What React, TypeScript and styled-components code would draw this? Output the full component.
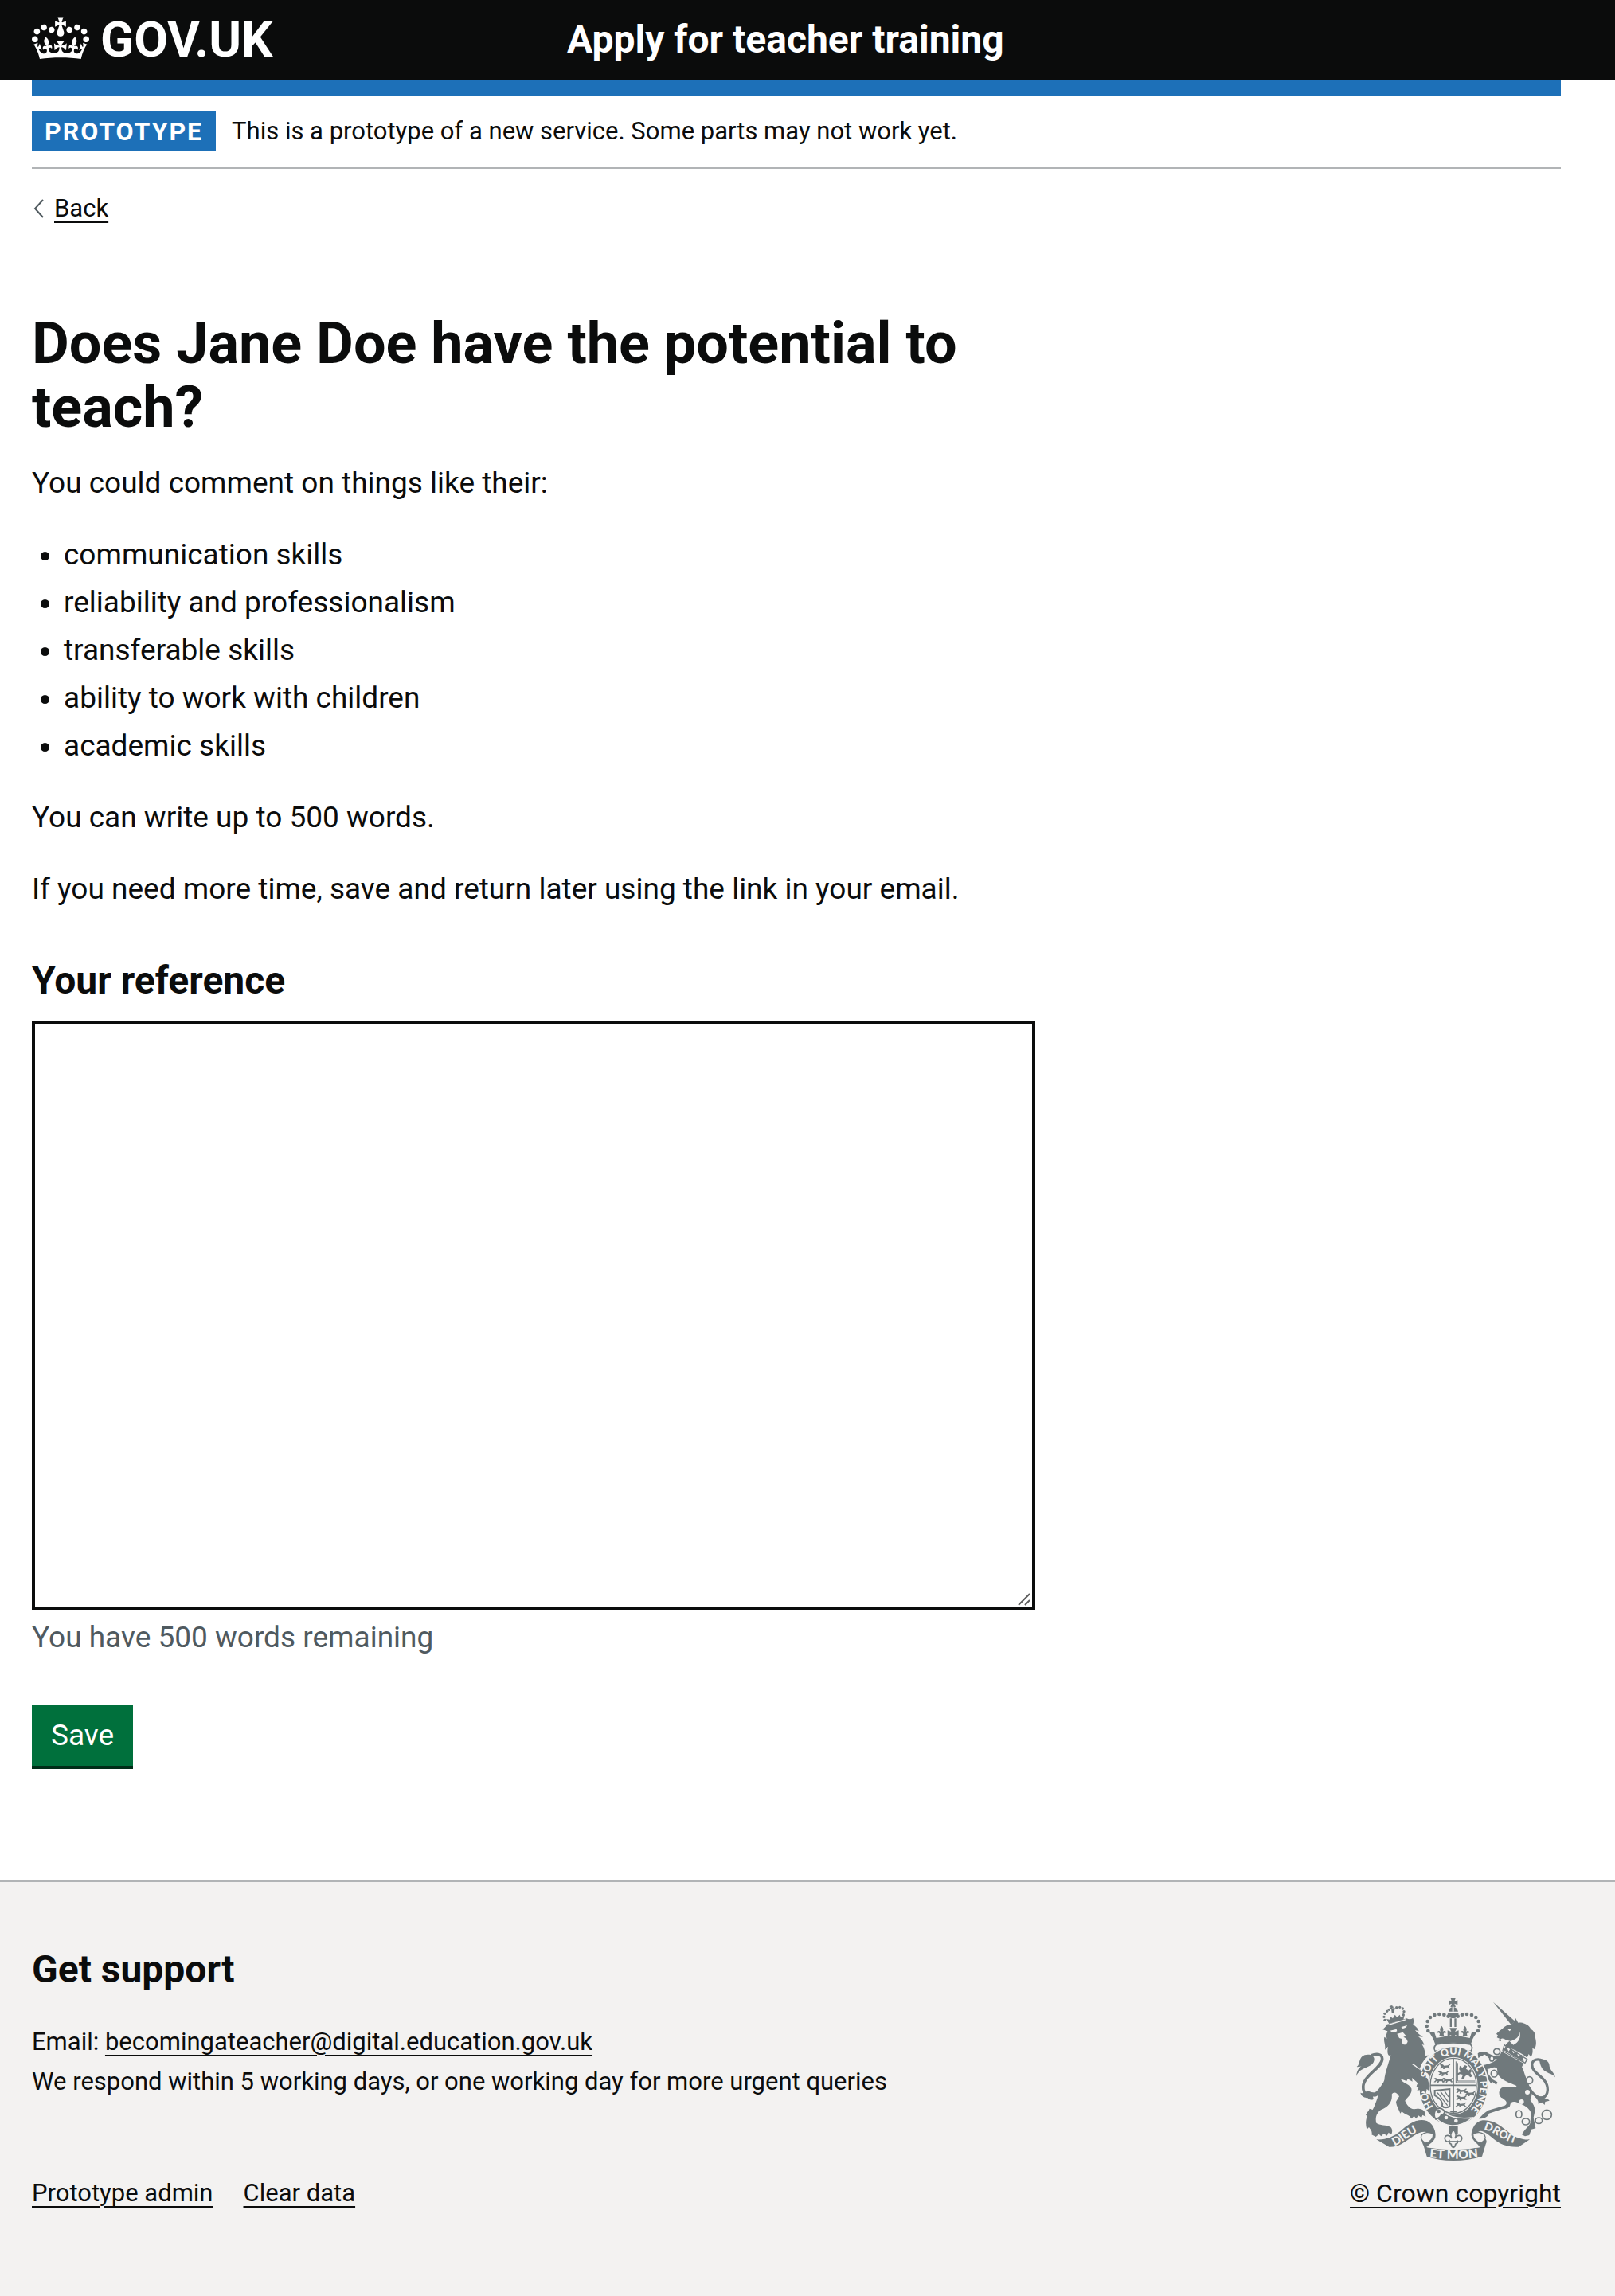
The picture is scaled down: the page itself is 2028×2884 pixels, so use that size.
import { useState } from "react";
import styled, { createGlobalStyle, css } from "styled-components";

const color = {
  ink: "#0b0c0c",
  blue: "#1d70b8",
  green: "#00703c",
  greenShadow: "#002d18",
  secondary: "#505a5f",
  border: "#b1b4b6",
  footer: "#f3f2f1",
  crest: "#70797c",
};

const WORD_LIMIT = 500;

const GlobalStyle = createGlobalStyle`
  *, *::before, *::after { box-sizing: border-box; }
  body {
    margin: 0;
    background: ${color.footer};
    color: ${color.ink};
    font-family: Roboto, "Liberation Sans", sans-serif;
    -webkit-font-smoothing: antialiased;
  }
`;

const textSmall = css`
  font-size: 31px;
  line-height: 40px;
`;

const textFooter = css`
  font-size: 31px;
  line-height: 50px;
`;

const textBody = css`
  font-size: 37px;
  line-height: 50px;
`;

const textMedium = css`
  font-size: 48px;
  line-height: 60px;
  font-weight: 700;
`;

const Page = styled.div`
  background: #fff;
`;

const Container = styled.div`
  max-width: 1920px;
  margin: 0 68px 0 40px;
`;

const Header = styled.header`
  background: ${color.ink};
  color: #fff;
`;

const HeaderRow = styled.div`
  display: grid;
  grid-template-columns: 1fr 2fr;
  column-gap: 48px;
  align-items: start;
  padding: 20px 0;
`;

const Logo = styled.a`
  display: flex;
  align-items: center;
  gap: 14px;
  color: #fff;
  text-decoration: none;
  font-size: 62px;
  line-height: 60px;
  font-weight: 700;
`;

const Crown = styled.svg`
  display: block;
  width: 72px;
  height: 54px;
  margin-bottom: 4px;
  fill: currentColor;
`;

const ServiceName = styled.a`
  ${textMedium}
  color: #fff;
  text-decoration: none;
`;

const BlueBar = styled.div`
  height: 20px;
  background: ${color.blue};
`;

const PhaseBanner = styled.div`
  display: flex;
  align-items: center;
  gap: 20px;
  padding: 20px 0;
  border-bottom: 2px solid ${color.border};
`;

const Tag = styled.strong`
  padding: 5px 16px;
  background: ${color.blue};
  color: #fff;
  font-size: 32px;
  line-height: 40px;
  letter-spacing: 2px;
  text-transform: uppercase;
`;

const PhaseText = styled.span`
  ${textSmall}
`;

const Link = styled.a`
  color: ${color.ink};
  text-decoration: underline;
  text-decoration-thickness: 2px;
  text-underline-offset: 6px;
`;

const BackRow = styled.nav`
  ${textSmall}
  display: flex;
  align-items: center;
  gap: 12px;
  margin: 30px 0;
`;

const Chevron = styled.svg`
  display: block;
  width: 16px;
  height: 24px;
  fill: none;
  stroke: ${color.secondary};
  stroke-width: 2;
`;

const Main = styled.main`
  padding: 80px 0 144px;
`;

const Column = styled.form`
  width: calc((100% + 60px) * 2 / 3 - 60px);
`;

const Heading = styled.h1`
  margin: 0 0 30px;
  font-size: 72px;
  line-height: 80px;
  font-weight: 700;
`;

const Paragraph = styled.p`
  ${textBody}
  margin: 0 0 40px;
`;

const BulletList = styled.ul`
  ${textBody}
  display: flex;
  flex-direction: column;
  gap: 10px;
  margin: 0 0 40px;
  padding: 0 0 0 40px;
`;

const Field = styled.div`
  display: flex;
  flex-direction: column;
  margin: 60px 0;
`;

const Label = styled.label`
  ${textMedium}
  margin-bottom: 20px;
`;

const TextAreaFrame = styled.div`
  position: relative;
  margin-bottom: 10px;
`;

const TextArea = styled.textarea`
  ${textBody}
  display: block;
  width: 100%;
  height: 740px;
  margin: 0;
  padding: 10px;
  border: 4px solid ${color.ink};
  border-radius: 0;
  background: #fff;
  color: ${color.ink};
  font-family: inherit;
  resize: vertical;

  &::-webkit-resizer {
    display: none;
  }
`;

const ResizeGrip = styled.svg`
  position: absolute;
  right: 6px;
  bottom: 5px;
  width: 16px;
  height: 16px;
  fill: none;
  stroke: #5f5f5f;
  stroke-width: 2;
  pointer-events: none;
`;

const WordCount = styled.div`
  ${textBody}
  color: ${color.secondary};
`;

const SaveButton = styled.button`
  display: block;
  padding: 18px 24px;
  border: 0;
  border-radius: 0;
  background: ${color.green};
  box-shadow: 0 4px 0 ${color.greenShadow};
  color: #fff;
  font-family: inherit;
  font-size: 37px;
  line-height: 40px;
`;

const Footer = styled.footer`
  border-top: 2px solid ${color.border};
  background: ${color.footer};
`;

const FooterRow = styled.div`
  display: flex;
  justify-content: space-between;
  align-items: flex-end;
  padding: 80px 0 104px;
`;

const FooterHeading = styled.h2`
  ${textMedium}
  margin: 0 0 36px;
`;

const FooterText = styled.p`
  ${textFooter}
  margin: 0;
`;

const FooterLinks = styled.nav`
  ${textFooter}
  display: flex;
  gap: 38px;
  margin-top: 90px;
`;

const Copyright = styled.div`
  font-size: 32px;
  line-height: 50px;
  display: flex;
  flex-direction: column;
  align-items: center;
  gap: 16px;
`;

const CrestSvg = styled.svg`
  display: block;
  width: 250px;
  height: 204px;
  overflow: visible;
  font-family: Lato, Roboto, sans-serif;
  font-weight: 900;
`;

function CrownIcon() {
  return (
    <Crown viewBox="0 0 132 97" aria-hidden="true">
      <path d="M25 30.2c3.5 1.5 7.7-.2 9.1-3.7 1.5-3.6-.2-7.8-3.9-9.2-3.6-1.4-7.6.3-9.1 3.9-1.4 3.5.3 7.5 3.9 9zM9 39.5c3.6 1.5 7.8-.2 9.2-3.7 1.5-3.6-.2-7.8-3.9-9.1-3.6-1.5-7.6.2-9.1 3.8-1.4 3.5.3 7.5 3.8 9zM4.4 57.2c3.5 1.5 7.7-.2 9.1-3.8 1.5-3.6-.2-7.7-3.9-9.1-3.5-1.5-7.6.3-9.1 3.8-1.4 3.5.3 7.6 3.9 9.1zm38.3-21.4c3.5 1.5 7.7-.2 9.1-3.8 1.5-3.6-.2-7.7-3.9-9.1-3.6-1.5-7.6.3-9.1 3.8-1.3 3.6.4 7.7 3.9 9.1zm64.4-5.6c-3.6 1.5-7.8-.2-9.1-3.7-1.5-3.6.2-7.8 3.8-9.2 3.6-1.4 7.7.3 9.2 3.9 1.3 3.5-.4 7.5-3.9 9zm15.9 9.3c-3.6 1.5-7.7-.2-9.1-3.7-1.5-3.6.2-7.8 3.7-9.1 3.6-1.5 7.7.2 9.2 3.8 1.5 3.5-.3 7.5-3.8 9zm4.7 17.7c-3.6 1.5-7.8-.2-9.2-3.8-1.5-3.6.2-7.7 3.9-9.1 3.6-1.5 7.7.3 9.2 3.8 1.3 3.5-.4 7.6-3.9 9.1zM89.3 35.8c-3.6 1.5-7.8-.2-9.2-3.8-1.4-3.6.2-7.7 3.9-9.1 3.6-1.5 7.7.3 9.2 3.8 1.4 3.6-.3 7.7-3.9 9.1zM69.7 17.7l8.9 4.7V9.3l-8.9 2.8c-.2-.3-.5-.6-.9-.9L72.4 0H59.6l3.5 11.2c-.3.3-.6.5-.9.9l-8.8-2.8v13.1l8.8-4.7c.3.3.6.7.9.9l-5 15.4v.1c-.2.8-.4 1.6-.4 2.4 0 4.1 3.1 7.5 7 8.1h.2c.3 0 .7.1 1 .1.4 0 .7 0 1-.1h.2c4-.6 7.1-4.1 7.1-8.1 0-.8-.1-1.7-.4-2.4V34l-5.1-15.4c.4-.2.7-.6 1-.9zM66 92.8c16.9 0 32.8 1.1 47.1 3.2 4-16.9 8.9-26.7 14-33.5l-9.6-3.4c1 4.9 1.1 7.2 0 10.2-1.5-1.4-3-4.3-4.2-8.7L108.6 76c2.8-2 5-3.2 7.5-3.3-4.4 9.4-10 11.9-13.6 11.2-4.3-.8-6.3-4.6-5.6-7.9 1-4.7 5.7-5.9 8-.5 4.3-8.7-3-11.4-7.6-8.8 7.1-7.2 7.9-13.5 2.1-21.1-8 6.1-8.1 12.3-4.5 20.8-4.7-5.4-12.1-2.5-9.5 6.2 3.4-5.2 7.9-2 7.2 3.1-.6 4.3-6.4 7.8-13.5 7.2-10.3-.9-10.9-8-11.2-13.8 2.5-.5 7.1 1.8 11 7.3L80.2 60c-4.1 4.4-8 5.3-12.3 5.4 1.4-4.4 8-11.6 8-11.6H55.5s6.4 7.2 7.9 11.6c-4.2-.1-8-1-12.3-5.4l1.4 16.4c3.9-5.5 8.5-7.7 10.9-7.3-.3 5.8-.9 12.8-11.1 13.8-7.2.6-12.9-2.9-13.5-7.2-.7-5 3.8-8.3 7.1-3.1 2.7-8.7-4.6-11.6-9.4-6.2 3.7-8.5 3.6-14.7-4.6-20.8-5.8 7.6-5 13.9 2.2 21.1-4.7-2.6-11.9.1-7.7 8.8 2.3-5.5 7.1-4.2 8.1.5.7 3.3-1.3 7.1-5.7 7.9-3.5.7-9-1.8-13.5-11.2 2.5.1 4.7 1.3 7.5 3.3l-4.7-15.4c-1.2 4.4-2.7 7.2-4.3 8.7-1.1-3-.9-5.3 0-10.2l-9.5 3.4c5 6.9 9.9 16.7 14 33.5 14.8-2.1 30.8-3.2 47.7-3.2z" />
    </Crown>
  );
}

const pearls = [
  [343, 213], [338, 195], [341, 177], [351, 162], [367, 153], [385, 150], [403, 152], [419, 158],
];

const smallPearls = [
  [180, 172], [177, 160], [180, 148], [188, 139], [250, 152], [252, 140], [247, 129], [236, 124], [224, 125], [196, 133],
];

const chainLinks = [
  [602, 291, 12, 11], [583, 317, 8, 10], [592, 374, 12, 13], [725, 399, 12, 13],
  [685, 527, 11, 14], [711, 555, 14, 12], [760, 551, 13, 11], [790, 529, 18, 18],
];

function SmallLion({ x, y }: { x: number; y: number }) {
  return (
    <path
      transform={`translate(${x} ${y})`}
      d="M0 3l6-3 7 2 4 4 14-1 7-5 3 2-6 6 2 5 5 3-8 1-4-5-9 1-3 4 4 2H13l2-7-6 1-3 4-6-1 5-5 3-3z"
    />
  );
}

function FleurDeLis({ x, y }: { x: number; y: number }) {
  return (
    <path
      transform={`translate(${x} ${y})`}
      d="M0-18c7 8 8 14 4 22 6-6 14-2 12 5-4-3-8-1-9 4l2 7H-9l2-7c-1-5-5-7-9-4-2-7 6-11 12-5-4-8-3-14 4-22z"
    />
  );
}

function Crest() {
  const bg = color.footer;
  return (
    <CrestSvg viewBox="72 90 750 612" fill={color.crest} role="img" aria-label="Royal coat of arms">
      <defs>
        <path id="garter" d="M438 538A101 118 0 0 1 438 302A101 118 0 0 1 438 538" />
        <path id="scroll-left" d="M216 646C250 634 268 606 322 586" />
        <path id="scroll-right" d="M548 584C596 592 612 626 700 646" />
        <path id="scroll-mid" d="M348 690Q438 700 530 690" />
        <clipPath id="shield"><ellipse cx="438" cy="420" rx="84" ry="101" /></clipPath>
      </defs>

      {/* Lion */}
      <path
        fill="none"
        stroke={color.crest}
        strokeWidth="11"
        d="M178 412C160 440 145 458 122 456C95 452 92 420 108 396C128 366 170 345 170 318C170 298 146 298 128 306"
      />
      <path d="M72 384C74 364 82 352 92 346C78 350 74 348 74 348C88 340 80 312 104 304C120 299 138 304 140 318C140 338 126 344 108 352C92 358 80 366 72 384z" />
      <path d="M112 438C106 448 98 450 88 446C92 462 104 464 116 466C120 474 130 474 138 470C136 464 134 462 136 460C146 464 156 456 160 448L130 444z" />
      <path d="M184 190L262 166Q276 172 286 164C290 174 288 182 286 190C298 196 304 204 308 214L294 210C302 220 314 230 324 236L306 234C318 244 326 256 328 266L320 264C330 280 332 294 332 306L345 305C330 318 318 334 312 356C328 374 344 394 346 412L350 442L338 432 334 450 326 438 314 448 316 434 302 438 308 424 298 426 304 410 282 390 284 404 266 394 262 402 240 394C244 410 270 410 280 430C284 450 266 462 256 476C262 492 274 506 290 508C304 504 324 506 330 518L334 536 322 530 318 540 306 532 298 544 290 534 280 544C272 526 254 530 244 516L238 524C232 506 224 498 222 480L234 460C226 446 214 440 206 452C210 480 192 500 166 510C150 520 142 540 148 560C160 570 186 566 202 576C210 584 208 596 204 604L194 596 188 608 176 600 166 610 158 602 146 612 130 604C134 592 126 584 120 576L112 584C106 564 108 546 114 534L108 530C112 520 120 514 122 506L134 510C142 496 146 482 152 466C158 436 172 416 178 398C180 370 196 332 202 304C190 312 188 290 192 272L180 284C184 264 174 256 178 236L188 242C182 230 188 222 190 214L172 208C176 202 186 198 184 190z" />
      <path fill={bg} d="M200 212L224 206 226 214Q210 224 200 212zM242 198L264 192Q260 204 244 204zM226 224L248 218 260 232 250 236Q264 240 266 254Q260 268 250 264Q240 256 246 244L234 240z" />
      <path fill="none" stroke={bg} strokeWidth="4" d="M284 338C304 350 326 368 340 402" />
      <path d="M186 168L196 186 250 170 254 154 240 162 236 152 226 162 218 152 210 166 200 158 198 170z" />
      <path d="M194 190L260 170" fill="none" stroke={bg} strokeWidth="4" />
      <path d="M198 120l14 5M203 131l4-13" stroke={color.crest} strokeWidth="6" />
      <path d="M204 128L218 126 214 148 206 144z" />
      {smallPearls.map(([cx, cy]) => <circle key={`${cx}-${cy}`} cx={cx} cy={cy} r="5" />)}

      {/* Unicorn */}
      <path d="M588 104L670 176 656 190z" />
      <path d="M656 188C664 184 668 174 672 164L682 182C704 180 724 192 730 206C742 212 750 228 746 236C752 256 750 270 744 282L736 278C738 292 736 302 730 312L722 300 716 314C690 292 658 280 634 270C636 262 644 256 652 250C636 252 628 236 616 244L618 252 608 250 612 242 602 238 606 230 600 224C608 214 618 210 626 202C634 192 646 190 656 188z" />
      <path fill={bg} d="M640 204l18 2-8 8zM650 252C676 246 690 232 686 212C696 236 684 256 664 266z" />
      <path d="M630 266L716 320 708 334 624 288z" fill={bg} stroke={color.crest} strokeWidth="4" />
      <path d="M628 286L636 268 646 290 656 276 664 298 676 288 682 310 696 302 704 330z" />
      <path d="M620 290L704 336C690 352 694 366 706 380C716 396 722 410 724 424C740 430 734 460 728 474C740 488 744 500 746 512L740 540 748 580 732 584 724 606 708 610 696 604C704 586 722 574 728 560L730 520C718 496 694 490 682 484C664 476 654 480 652 492C652 504 634 506 622 508L572 524C570 536 556 544 534 544C546 530 556 520 570 512L632 494C648 484 632 470 618 464C604 452 610 424 632 424C650 420 676 430 676 420C650 408 616 400 606 376L602 352C586 346 576 358 566 356L570 376 586 396 604 406 600 416 584 404 580 412 562 384 552 362 544 350 550 342C572 338 596 330 602 318L584 322C574 322 566 306 556 302L540 310 532 316 530 298C542 288 560 290 570 298L592 308 614 304z" />
      <path
        fill="none"
        stroke={color.crest}
        strokeWidth="10"
        d="M694 352C708 400 722 446 760 464C796 470 800 430 784 404C768 380 734 368 734 340C736 320 756 316 776 326"
      />
      <path d="M762 320C784 316 800 328 800 346C802 362 818 370 822 388C812 374 800 376 790 368C774 362 764 344 762 320z" />
      <path d="M742 456C752 470 760 476 758 488L772 482 782 492 784 480 800 476C796 468 784 470 776 462z" />
      {chainLinks.map(([cx, cy, rx, ry]) => (
        <ellipse key={`${cx}-${cy}`} cx={cx} cy={cy} rx={rx} ry={ry} fill={bg} stroke={color.crest} strokeWidth="5" />
      ))}
      <circle cx="717" cy="444" r="9" fill={bg} />
      <circle cx="695" cy="480" r="9" fill={bg} />

      {/* Imperial crown */}
      <path d="M428 90h18l-4 12 12-5v18l-12-5 5 13h-20l5-13-12 5V97l12 5z" />
      <path d="M420 140Q422 124 437 122Q452 124 456 140z" />
      <path d="M434 122h6v18h-6z" fill={bg} />
      <path d="M416 146H458Q456 164 437 166Q418 164 416 146zM425 166h7v32h-7zM442 166h7v32h-7z" />
      {pearls.map(([cx, cy]) => (
        <g key={`${cx}-${cy}`}>
          <circle cx={cx} cy={cy} r="7" />
          <circle cx={874 - cx} cy={cy} r="7" />
        </g>
      ))}
      <path d="M348 220L366 216 374 240Q437 224 500 240L508 216 526 220C510 240 508 252 504 264Q437 250 370 264C366 252 362 240 348 220z" />
      <FleurDeLis x={394} y={212} />
      <FleurDeLis x={482} y={212} />
      <path d="M424 202h28l-8 14 14-5v22l-14-5 4 14h-22l4-14-14 5v-22l14 5z" />
      <path d="M374 264Q437 252 502 264Q514 274 504 290Q437 268 370 290Q360 276 374 264z" fill={bg} stroke={color.crest} strokeWidth="5" />

      {/* Garter and shield */}
      <ellipse cx="438" cy="421" rx="133" ry="151" fill={bg} />
      <ellipse cx="438" cy="421" rx="128" ry="147" />
      <path d="M332 366L350 384Q342 420 352 452L318 446 308 400z" fill={bg} />
      <path d="M300 350Q344 380 346 412L350 442L338 432 334 450 326 438 314 448 316 434 302 438 308 424 298 426 304 410z" />
      <ellipse cx="438" cy="420" rx="92" ry="109" fill={bg} />
      <ellipse cx="438" cy="420" rx="87" ry="104" fill="none" stroke={color.crest} strokeWidth="4" />
      <path d="M438 316V524M351 418H525" stroke={color.crest} strokeWidth="5" />
      <g clipPath="url(#shield)">
        <SmallLion x={386} y={338} />
        <SmallLion x={380} y={364} />
        <SmallLion x={364} y={390} />
        <SmallLion x={396} y={390} />
        <SmallLion x={448} y={430} />
        <SmallLion x={448} y={456} />
        <SmallLion x={446} y={482} />
        <SmallLion x={480} y={440} />
        <path d="M448 328V408H524M454 334V402H520" fill="none" stroke={color.crest} strokeWidth="3" />
        <path d="M462 344l10 8 10-10 8 4-4 10 10 6 10-8 6 6-10 12 8 12-8 4-10-10-10 6-4 12-10-2 6-16-12-2-8 6-2-8 14-8-6-8z" />
        <path d="M368 438L424 432V498Q404 506 396 496Q402 476 368 456z" fill="none" stroke={color.crest} strokeWidth="6" />
        <path d="M378 446L416 494M390 442L418 480M404 438L420 462" stroke={color.crest} strokeWidth="4" />
        <path d="M418 524Q426 514 438 512Q452 514 458 524z" />
      </g>
      <path d="M372 512Q400 500 404 522Q440 548 510 540Q470 572 432 570Q400 566 380 548z" stroke={bg} strokeWidth="4" />
      <path d="M372 546Q360 528 372 510Q388 498 402 512Q410 526 392 530Q388 540 372 546z" fill={bg} stroke={color.crest} strokeWidth="5" />
      <circle cx="383" cy="516" r="7" />
      <circle cx="411" cy="540" r="7" fill={bg} />
      <circle cx="448" cy="552" r="7" fill={bg} />
      <g fill={bg} fontSize="38">
        <text><textPath href="#garter" startOffset="88">HO</textPath></text>
        <text><textPath href="#garter" startOffset="200">SOIT</textPath></text>
        <text><textPath href="#garter" startOffset="299">QUI</textPath></text>
        <text><textPath href="#garter" startOffset="380">MAL</textPath></text>
        <text><textPath href="#garter" startOffset="464">Y</textPath></text>
        <text><textPath href="#garter" startOffset="498">PENSE</textPath></text>
      </g>

      {/* Motto scroll */}
      <path d="M148 622C184 624 214 612 242 588C272 562 306 540 338 552C362 562 374 592 370 614C362 636 342 640 340 652Q438 668 536 652C534 636 510 632 506 606C506 580 524 552 548 550C590 546 620 574 648 596C676 616 700 624 726 622L684 650C640 652 612 638 590 620C574 606 560 594 542 590C524 592 522 604 532 610C560 614 568 624 560 640L546 686Q494 702 438 702Q382 702 338 686L326 646C312 620 318 596 344 596C320 588 300 600 280 614C252 634 228 652 196 650z" />
      <path d="M318 606C326 594 348 592 362 602C364 616 352 630 334 636C318 628 314 616 318 606zM556 606C548 594 526 592 512 602C510 616 524 630 540 636C556 628 562 616 556 606z" fill={bg} stroke={color.crest} strokeWidth="4" />
      <path d="M338 650Q438 668 538 650" fill="none" stroke={bg} strokeWidth="3" />
      <g fill={bg}>
        <text fontSize="43"><textPath href="#scroll-left">DIEU</textPath></text>
        <text fontSize="42"><textPath href="#scroll-right" startOffset="4">DROIT</textPath></text>
        <text fontSize="47"><textPath href="#scroll-mid">ET MON</textPath></text>
      </g>
      <path d="M421 572h34v30h-34z" />
      <path
        d="M438 584C450 598 450 608 444 618C452 602 472 604 470 620C468 630 460 632 454 628Q456 636 446 640Q446 650 438 652Q430 650 430 640Q420 636 422 628C416 632 408 630 406 620C404 604 424 602 432 618C426 608 426 598 438 584z"
        fill={bg}
        stroke={color.crest}
        strokeWidth="5"
      />
      <path d="M420 630h36" stroke={color.crest} strokeWidth="5" />
    </CrestSvg>
  );
}

const topics = [
  "communication skills",
  "reliability and professionalism",
  "transferable skills",
  "ability to work with children",
  "academic skills",
];

export default function App() {
  const [reference, setReference] = useState("");
  const used = reference.split(/\s+/).filter(Boolean).length;

  return (
    <>
      <GlobalStyle />
      <Page>
        <Header>
          <Container>
            <HeaderRow>
              <Logo href="#">
                <CrownIcon />
                GOV.UK
              </Logo>
              <ServiceName href="#">Apply for teacher training</ServiceName>
            </HeaderRow>
          </Container>
        </Header>
        <Container>
          <BlueBar />
          <PhaseBanner>
            <Tag>Prototype</Tag>
            <PhaseText>This is a prototype of a new service. Some parts may not work yet.</PhaseText>
          </PhaseBanner>
          <BackRow aria-label="Back">
            <Chevron viewBox="0 0 16 24" aria-hidden="true">
              <path d="M14 1L4 12l10 11" />
            </Chevron>
            <Link href="#">Back</Link>
          </BackRow>
          <Main>
            <Column onSubmit={(event) => event.preventDefault()}>
              <Heading>Does Jane Doe have the potential to teach?</Heading>
              <Paragraph>You could comment on things like their:</Paragraph>
              <BulletList>
                {topics.map((topic) => (
                  <li key={topic}>{topic}</li>
                ))}
              </BulletList>
              <Paragraph>You can write up to 500 words.</Paragraph>
              <Paragraph>If you need more time, save and return later using the link in your email.</Paragraph>
              <Field>
                <Label htmlFor="reference">Your reference</Label>
                <TextAreaFrame>
                  <TextArea
                    id="reference"
                    aria-describedby="reference-count"
                    value={reference}
                    onChange={(event) => setReference(event.target.value)}
                  />
                  <ResizeGrip viewBox="0 0 16 16" aria-hidden="true">
                    <path d="M1 15L15 1M9 15l6-6" />
                  </ResizeGrip>
                </TextAreaFrame>
                <WordCount id="reference-count">You have {WORD_LIMIT - used} words remaining</WordCount>
              </Field>
              <SaveButton type="submit">Save</SaveButton>
            </Column>
          </Main>
        </Container>
      </Page>
      <Footer>
        <Container>
          <FooterRow>
            <div>
              <FooterHeading>Get support</FooterHeading>
              <FooterText>
                Email: <Link href="#">becomingateacher@digital.education.gov.uk</Link>
              </FooterText>
              <FooterText>We respond within 5 working days, or one working day for more urgent queries</FooterText>
              <FooterLinks aria-label="Prototype">
                <Link href="#">Prototype admin</Link>
                <Link href="#">Clear data</Link>
              </FooterLinks>
            </div>
            <Copyright>
              <Crest />
              <Link href="#">© Crown copyright</Link>
            </Copyright>
          </FooterRow>
        </Container>
      </Footer>
    </>
  );
}
